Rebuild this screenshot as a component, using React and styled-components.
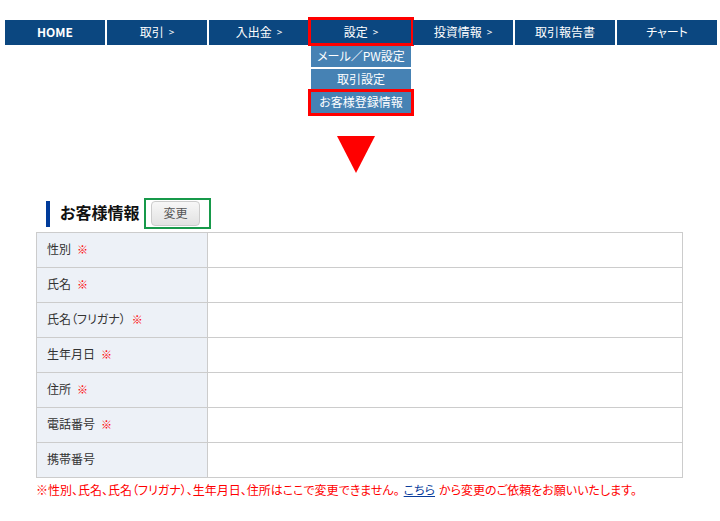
import React from "react";
import styled, { createGlobalStyle } from "styled-components";

const GlobalStyle = createGlobalStyle`
  body {
    margin: 0;
    background: #fff;
    font-family: "Noto Sans CJK JP", "Noto Sans", sans-serif;
    font-size: 12px;
    color: #333;
    font-feature-settings: "palt";
  }
`;

const Nav = styled.ul`
  display: flex;
  gap: 2px;
  list-style: none;
  margin: 20px 0 0 5px;
  padding: 0;
`;

const NavItem = styled.li`
  position: relative;
  width: 100px;
  height: 25px;
  background: #0b4780;
  color: #fff;
  font-size: 12px;
  font-weight: ${(p) => (p.$bold ? 700 : 400)};
  display: flex;
  align-items: center;
  justify-content: center;
  line-height: 1;
  padding-bottom: 2px;
  box-sizing: border-box;
`;

const Arrow = styled.span`
  font-size: 10px;
  margin-left: 5px;
`;

const Mark = styled.span`
  position: absolute;
  top: -3px;
  left: -3px;
  right: -3px;
  bottom: ${(p) => p.$bottom ?? "-1px"};
  border: 3px solid #f00;
  pointer-events: none;
`;

const Dropdown = styled.ul`
  position: absolute;
  top: 26px;
  left: 0;
  width: 100px;
  list-style: none;
  margin: 0;
  padding: 0;
  display: flex;
  flex-direction: column;
  gap: 2px;
  z-index: 2;
`;

const DropItem = styled.li`
  position: relative;
  height: 21px;
  background: #4682b4;
  color: #fff;
  font-size: 12px;
  display: flex;
  align-items: center;
  justify-content: center;
  white-space: nowrap;
  padding-bottom: 2px;
  box-sizing: border-box;
`;

const Triangle = styled.div`
  width: 0;
  height: 0;
  margin: 91px 0 0 337px;
  border-left: 19px solid transparent;
  border-right: 19px solid transparent;
  border-top: 37px solid #f00;
`;

const Section = styled.section`
  margin: 25px 0 0 36px;
  width: 647px;
`;

const HeadRow = styled.div`
  display: flex;
  align-items: center;
  padding-left: 10px;
  height: 31px;
`;

const Bar = styled.span`
  width: 4px;
  height: 26px;
  background: #003b9a;
  margin-right: 10px;
`;

const Title = styled.h2`
  margin: 0 2px 3px 0;
  width: 82px;
  font-size: 16px;
  font-weight: 700;
  color: #111;
  white-space: nowrap;
`;

const GreenBox = styled.div`
  border: 2px solid #17994a;
  height: 27px;
  padding: 0 9px 0 5px;
  display: flex;
  align-items: center;
`;

const ChangeButton = styled.button`
  width: 49px;
  height: 25px;
  border: 1px solid #ccc;
  border-radius: 4px;
  background: linear-gradient(#f7f7f7, #e2e2e2);
  color: #555;
  font-family: inherit;
  font-feature-settings: "palt";
  font-size: 12px;
  padding: 0 0 2px;
`;

const Table = styled.table`
  width: 100%;
  margin-top: 3px;
  border-collapse: collapse;
  table-layout: fixed;
`;

const Th = styled.th`
  width: 160px;
  height: 31px;
  border: 1px solid #ccc;
  background: #edf1f7;
  text-align: left;
  font-weight: 400;
  padding: 0 0 3px 10px;
  color: #333;
  font-size: 12px;
`;

const Td = styled.td`
  border: 1px solid #ccc;
  background: #fff;
`;

const Req = styled.span`
  color: #f00;
  font-size: 11px;
  margin-left: 6px;
`;

const Note = styled.p`
  margin: 3px 0 0;
  color: #f00;
  font-size: 12px;
  white-space: nowrap;
`;

const NoteLink = styled.a`
  color: #0a3d9c;
  text-decoration: underline;
  margin: 0 4px;
`;

const menu = [
  { label: "HOME", bold: true },
  { label: "取引", arrow: true },
  { label: "入出金", arrow: true },
  { label: "設定", arrow: true, active: true },
  { label: "投資情報", arrow: true },
  { label: "取引報告書" },
  { label: "チャート" },
];

const subMenu = [
  { label: "メール／PW設定" },
  { label: "取引設定" },
  { label: "お客様登録情報", marked: true },
];

const rows = [
  { label: "性別", req: true },
  { label: "氏名", req: true },
  { label: "氏名（フリガナ）", req: true },
  { label: "生年月日", req: true },
  { label: "住所", req: true },
  { label: "電話番号", req: true },
  { label: "携帯番号" },
];

export default function App() {
  return (
    <>
      <GlobalStyle />
      <Nav>
        {menu.map((m) => (
          <NavItem key={m.label} $bold={m.bold}>
            {m.label}
            {m.arrow && <Arrow>&gt;</Arrow>}
            {m.active && (
              <>
                <Mark />
                <Dropdown>
                  {subMenu.map((s) => (
                    <DropItem key={s.label}>
                      {s.label}
                      {s.marked && <Mark $bottom="-3px" />}
                    </DropItem>
                  ))}
                </Dropdown>
              </>
            )}
          </NavItem>
        ))}
      </Nav>
      <Triangle />
      <Section>
        <HeadRow>
          <Bar />
          <Title>お客様情報</Title>
          <GreenBox>
            <ChangeButton>変更</ChangeButton>
          </GreenBox>
        </HeadRow>
        <Table>
          <tbody>
            {rows.map((r) => (
              <tr key={r.label}>
                <Th>
                  {r.label}
                  {r.req && <Req>※</Req>}
                </Th>
                <Td />
              </tr>
            ))}
          </tbody>
        </Table>
        <Note>
          ※性別、氏名、氏名（フリガナ）、生年月日、住所はここで変更できません。
          <NoteLink href="#">こちら</NoteLink>
          から変更のご依頼をお願いいたします。
        </Note>
      </Section>
    </>
  );
}
